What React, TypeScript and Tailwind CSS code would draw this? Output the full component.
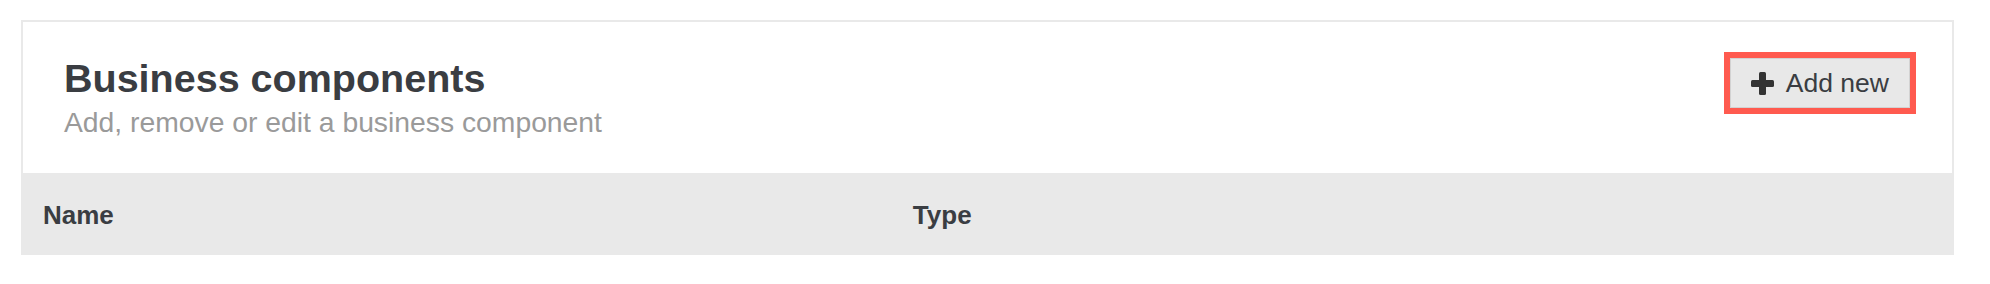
import React from 'react'

const columns = ['Name', 'Type']

const PlusIcon = () => (
  <svg width="23" height="23" viewBox="0 0 23 23" aria-hidden="true">
    <rect x="8" y="0" width="7" height="23" rx="1.5" fill="#333333" />
    <rect x="0" y="8" width="23" height="7" rx="1.5" fill="#333333" />
  </svg>
)

export default function App() {
  return (
    <div className="min-h-screen bg-white pt-[20px] font-['Liberation_Sans',Arial,sans-serif]">
      <div className="ml-[21px] w-[1933px]">
        {/* card header */}
        <div className="flex items-start justify-between border-2 border-b-0 border-[#e9e9e9] pl-[41px] pr-[42px] pt-[33px] pb-[35px]">
          <div>
            <h1 className="text-[39.5px] leading-[46px] font-bold text-[#3a3d42]">Business components</h1>
            <p className="mt-[5px] text-[28.3px] leading-[32px] text-[#9a9a9a]">
              Add, remove or edit a business component
            </p>
          </div>
          <div className="mt-[3px] outline-[6px] outline-solid outline-[#ff5a4f]">
            <button className="flex h-[50px] items-center gap-[12px] border border-[#d2d2d2] bg-[#e8e8e8] pl-[20px] pr-[20px] text-[26.5px] leading-none text-[#3a3d42]">
              <PlusIcon />
              <span>Add new</span>
            </button>
          </div>
        </div>

        {/* table head */}
        <div className="grid h-[82px] grid-cols-[45%_1fr] items-center bg-[#e9e9e9]">
          {columns.map((c) => (
            <div key={c} className="pl-[22px] pt-[2px] text-[26px] leading-none font-bold text-[#3a3d42]">
              {c}
            </div>
          ))}
        </div>
      </div>
    </div>
  )
}
